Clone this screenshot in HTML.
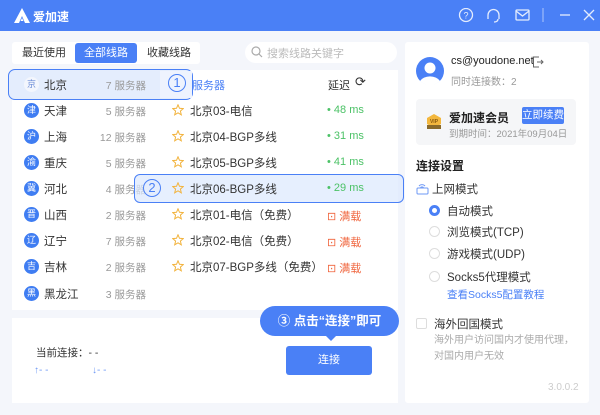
<!DOCTYPE html>
<html><head><meta charset="utf-8"><style>
*{margin:0;padding:0;box-sizing:border-box}
body{width:600px;height:415px;background:#f4f6fb;font-family:"Liberation Sans","Noto Sans CJK SC",sans-serif;font-size:11px;color:#333;position:relative;overflow:hidden}
.a{position:absolute}
.hdr{left:0;top:0;width:600px;height:31px;background:#4a80f6}
.w{background:#fff}
.tab{top:43px;height:20px;line-height:20px;text-align:center;font-size:11px}
.ic{position:absolute;left:24px;top:0;width:15px;height:15px;border-radius:50%;background:#3f7df2;color:#fff;font-size:9px;line-height:15px;text-align:center}
.row{position:absolute;left:0;width:398px;height:26px}
.pn{position:absolute;left:44px;top:0;font-size:11.5px;color:#333}
.pc{position:absolute;right:252px;top:1px;font-size:10.5px;color:#999}
.star{position:absolute;left:172px;top:1px;width:12px;height:12px}
.sn{position:absolute;left:190px;top:0;font-size:11.5px}
.ms{position:absolute;left:327px;top:1px;color:#4cc267;font-size:11px}
.full{position:absolute;left:327px;top:1px;color:#f0643c;font-size:11px}
.rad{position:absolute;left:429px;width:11px;height:11px;border-radius:50%;border:1px solid #ddd;background:#fff}
.rl{position:absolute;left:447px;font-size:11.5px;color:#333}
</style></head><body>
<svg width="0" height="0" style="position:absolute"><defs><symbol id="st" viewBox="0 0 12 12"><path d="M6 .8L7.5 4.3L11.3 4.6L8.4 7.1L9.3 10.8L6 8.8L2.7 10.8L3.6 7.1L.7 4.6L4.5 4.3Z" fill="none" stroke="#f2b33d" stroke-width="1"/></symbol></defs></svg>
<div class="a hdr"></div>
<svg class="a" style="left:12px;top:7px" width="20" height="17" viewBox="0 0 20 17"><path d="M10 1 L2 16 L7 16 L10 9 L13 16 L18 16 Z M10 11 L8.5 14 L11.5 14Z" fill="#fff"/></svg>
<div class="a" style="left:33px;top:8px;color:#fff;font-size:12px;font-weight:bold">爱加速</div>
<svg class="a" style="left:458px;top:8px" width="140" height="16" viewBox="0 0 140 16" fill="none" stroke="#fff" stroke-width="1.3" opacity=".85">
<circle cx="8" cy="7" r="6.5"/><text x="8" y="10.5" font-size="9" fill="#fff" stroke="none" text-anchor="middle">?</text>
<path d="M30 11 V7 a5.5 5.5 0 0 1 11 0 V11"/><path d="M40 11 q0 3 -4 3"/>
<rect x="58" y="2" width="13" height="10" rx="1"/><path d="M58 3 L64.5 8 L71 3"/>
<path d="M85 0 V14" stroke-opacity=".5"/>
<path d="M102 7 H112"/><path d="M126 2 L136 12 M136 2 L126 12"/>
</svg>
<div class="a w" style="left:12px;top:42px;width:188px;height:22px;border-radius:3px"></div>
<div class="a tab" style="left:18px;width:52px">最近使用</div>
<div class="a tab" style="left:75px;width:62px;background:#4a80f6;color:#fff;border-radius:3px">全部线路</div>
<div class="a tab" style="left:140px;width:58px">收藏线路</div>
<div class="a w" style="left:245px;top:42px;width:152px;height:21px;border-radius:11px"></div>
<svg class="a" style="left:251px;top:46px" width="12" height="12" viewBox="0 0 12 12" fill="none" stroke="#aaa" stroke-width="1.2"><circle cx="5" cy="5" r="4"/><path d="M8 8 L11 11"/></svg>
<div class="a" style="left:267px;top:45px;color:#bbb;font-size:11px">搜索线路关键字</div>
<div class="a w" style="left:12px;top:70px;width:386px;height:240px"></div>
<div class="a" style="left:8px;top:69px;width:185px;height:31px;border:1.5px solid #4a80f6;border-radius:7px;background:#e4edfd"></div>
<div class="a" style="left:160px;top:71px;width:32px;height:27px;background:#eef3fe"></div>
<div class="a" style="left:168px;top:74px;width:18px;height:18px;border:1.5px solid #4a80f6;border-radius:50%;color:#4a80f6;font-size:13px;text-align:center;line-height:16px">1</div>
<div class="a" style="left:192px;top:77px;color:#4a80f6;font-size:11px">服务器</div>
<div class="a" style="left:328px;top:77px;font-size:11px">延迟</div>
<div class="a" style="left:355px;top:74px;font-size:13px;color:#333">⟳</div>
<div class="row" style="top:77px"><span class="ic" style="background:#f3f6fd;color:#6f8fd8">京</span><span class="pn">北京</span><span class="pc">7 服务器</span></div>
<div class="row" style="top:103px"><span class="ic">津</span><span class="pn">天津</span><span class="pc">5 服务器</span><svg class="star"><use href="#st"/></svg><span class="sn">北京03-电信</span><span class="ms">• 48 ms</span></div>
<div class="row" style="top:129px"><span class="ic">沪</span><span class="pn">上海</span><span class="pc">12 服务器</span><svg class="star"><use href="#st"/></svg><span class="sn">北京04-BGP多线</span><span class="ms">• 31 ms</span></div>
<div class="row" style="top:155px"><span class="ic">渝</span><span class="pn">重庆</span><span class="pc">5 服务器</span><svg class="star"><use href="#st"/></svg><span class="sn">北京05-BGP多线</span><span class="ms">• 41 ms</span></div>
<div class="row" style="top:181px"><span class="ic">冀</span><span class="pn">河北</span><span class="pc">4 服务器</span></div>
<div class="row" style="top:207px"><span class="ic">晋</span><span class="pn">山西</span><span class="pc">2 服务器</span><svg class="star"><use href="#st"/></svg><span class="sn">北京01-电信（免费）</span><span class="full">⊡ 满载</span></div>
<div class="row" style="top:233px"><span class="ic">辽</span><span class="pn">辽宁</span><span class="pc">7 服务器</span><svg class="star"><use href="#st"/></svg><span class="sn">北京02-电信（免费）</span><span class="full">⊡ 满载</span></div>
<div class="row" style="top:259px"><span class="ic">吉</span><span class="pn">吉林</span><span class="pc">2 服务器</span><svg class="star"><use href="#st"/></svg><span class="sn">北京07-BGP多线（免费）</span><span class="full">⊡ 满载</span></div>
<div class="row" style="top:286px"><span class="ic">黑</span><span class="pn">黑龙江</span><span class="pc">3 服务器</span></div>
<div class="a" style="left:134px;top:174px;width:270px;height:29px;border:1.5px solid #4a80f6;border-radius:6px;background:rgba(220,232,253,.7)"></div>
<div class="a" style="left:143px;top:179px;width:18px;height:18px;border:1.5px solid #4a80f6;border-radius:50%;color:#4a80f6;font-size:13px;text-align:center;line-height:16px;background:#e4edfd">2</div>
<svg class="a" style="left:172px;top:182px" width="12" height="12"><use href="#st"/></svg>
<div class="a" style="left:190px;top:181px;font-size:11.5px">北京06-BGP多线</div>
<div class="a" style="left:327px;top:182px;color:#4cc267">• 29 ms</div>
<div class="a w" style="left:12px;top:318px;width:386px;height:85px"></div>
<div class="a" style="left:36px;top:345px;font-size:10.5px">当前连接：- -</div>
<div class="a" style="left:34px;top:365px;font-size:10px;color:#6e98f5">↑- -</div>
<div class="a" style="left:92px;top:365px;font-size:10px;color:#6e98f5">↓- -</div>
<div class="a" style="left:260px;top:306px;width:139px;height:30px;background:#4a80f6;border-radius:15px;color:#fff;font-size:12.5px;font-weight:bold;line-height:30px;text-align:center">③ 点击“连接”即可</div>
<div class="a" style="left:325px;top:335px;width:0;height:0;border-left:6px solid transparent;border-right:6px solid transparent;border-top:6px solid #4a80f6"></div>
<div class="a" style="left:286px;top:346px;width:86px;height:29px;background:#4a80f6;border-radius:3px;color:#fff;font-size:11px;text-align:center;line-height:29px">连接</div>
<div class="a w" style="left:405px;top:42px;width:184px;height:361px;border-radius:3px"></div>
<svg class="a" style="left:415px;top:56px" width="30" height="30" viewBox="0 0 30 30"><circle cx="15" cy="15" r="14" fill="#4a80f6"/><circle cx="15" cy="12" r="5.5" fill="#fff"/><path d="M5 25 a11 8 0 0 1 20 0 a14 14 0 0 1 -20 0Z" fill="#fff"/></svg>
<div class="a" style="left:451px;top:55px;font-size:11px;color:#222">cs@youdone.net</div>
<svg class="a" style="left:532px;top:56px" width="12" height="12" viewBox="0 0 12 12" fill="none" stroke="#666" stroke-width="1"><path d="M7 1H1.5V11H7M5 6H11M9 4L11 6L9 8"/></svg>
<div class="a" style="left:451px;top:73px;font-size:10px;color:#999">同时连接数：2</div>
<div class="a" style="left:416px;top:99px;width:160px;height:46px;background:#f5f6f8;border-radius:4px"></div>
<svg class="a" style="left:426px;top:113px" width="16" height="18" viewBox="0 0 16 18"><path d="M8 1L15 5V11L8 15L1 11V5Z" fill="#f3b73d"/><rect x="1" y="12" width="14" height="4" fill="#8a6a2a"/><text x="8" y="10" font-size="5" fill="#8a5a10" text-anchor="middle" font-weight="bold">VIP</text></svg>
<div class="a" style="left:449px;top:109px;font-size:12px;color:#222;font-weight:bold">爱加速会员</div>
<div class="a" style="left:522px;top:107px;width:42px;height:17px;background:#4a80f6;color:#fff;border-radius:2px;font-size:10.5px;line-height:17px;text-align:center">立即续费</div>
<div class="a" style="left:449px;top:126px;font-size:9.5px;color:#999">到期时间：2021年09月04日</div>
<div class="a" style="left:416px;top:157px;font-size:12px;color:#222;font-weight:bold">连接设置</div>
<svg class="a" style="left:416px;top:182px" width="13" height="13" viewBox="0 0 13 13" fill="none" stroke="#6e98f5" stroke-width="1"><rect x="1" y="6" width="11" height="6" rx="1"/><path d="M3 4a4 4 0 0 1 6 0M4.5 5.5a2 2 0 0 1 3 0"/></svg>
<div class="a" style="left:432px;top:181px;font-size:11.5px">上网模式</div>
<div class="rad" style="top:205px;border:3px solid #4a80f6"></div><div class="rl" style="top:203px">自动模式</div>
<div class="rad" style="top:226px"></div><div class="rl" style="top:224px">浏览模式(TCP)</div>
<div class="rad" style="top:248px"></div><div class="rl" style="top:246px">游戏模式(UDP)</div>
<div class="rad" style="top:271px"></div><div class="rl" style="top:269px">Socks5代理模式</div>
<div class="a" style="left:447px;top:287px;font-size:10.5px;color:#4a80f6">查看Socks5配置教程</div>
<div class="a" style="left:416px;top:318px;width:11px;height:11px;border:1px solid #ddd;border-radius:2px"></div>
<div class="a" style="left:434px;top:316px;font-size:11.5px">海外回国模式</div>
<div class="a" style="left:434px;top:333px;font-size:10px;color:#aaa;line-height:16px">海外用户访问国内才使用代理，<br>对国内用户无效</div>
<div class="a" style="left:548px;top:382px;font-size:10px;color:#ccc">3.0.0.2</div>
</body></html>
